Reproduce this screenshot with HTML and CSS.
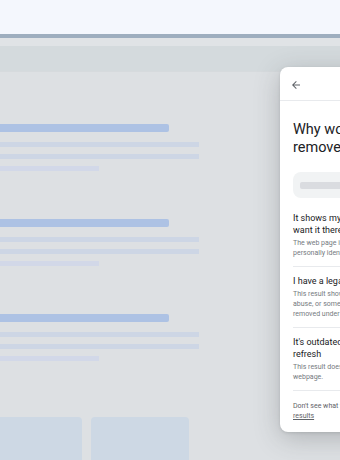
FILE: index.html
```html
<!DOCTYPE html>
<html lang="en">
<head>
  <meta charset="UTF-8">
  <title>Remove result</title>
  <link rel="stylesheet" href="styles.css">
</head>
<body>

<div class="hero"></div>

<div class="window">
  <div class="chrome">
    <div class="tabs"></div>
    <div class="toolbar"></div>
  </div>

  <div class="page">
    <div class="result">
      <div class="bar"></div>
      <div class="line"></div>
      <div class="line"></div>
      <div class="line short"></div>
    </div>
    <div class="result">
      <div class="bar"></div>
      <div class="line"></div>
      <div class="line"></div>
      <div class="line short"></div>
    </div>
    <div class="result">
      <div class="bar"></div>
      <div class="line"></div>
      <div class="line"></div>
      <div class="line short"></div>
    </div>
    <div class="tiles">
      <div class="tile"></div>
      <div class="tile"></div>
    </div>
  </div>

  <aside class="panel">
    <div class="panel-head">
      <svg class="back" viewBox="0 0 24 24" width="12" height="12">
        <path d="M20 11H7.83l5.59-5.59L12 4l-8 8 8 8 1.41-1.41L7.83 13H20v-2z" fill="#5f6368"/>
      </svg>
    </div>
    <div class="panel-body">
      <h1>Why would you like this result<br>removed?</h1>
      <div class="result-preview"><span></span></div>

      <div class="options">
        <div class="option">
          <h2>It shows my personal contact info and I don't<br>want it there</h2>
          <p>The web page includes my contact info or other<br>personally identifiable info</p>
        </div>
        <div class="option">
          <h2>I have a legal removal request</h2>
          <p>This result shows content related to harassment,<br>abuse, or something else that should be<br>removed under the law</p>
        </div>
        <div class="option">
          <h2>It's outdated and I want to request a<br>refresh</h2>
          <p>This result doesn't match the current<br>webpage.</p>
        </div>
      </div>
      <p class="footer">Don't see what you're looking for? <a href="#">Learn about removing<br>results</a></p>
    </div>
  </aside>
</div>

</body>
</html>
```

FILE: styles.css
```css
body {
  margin: 0;
  width: 340px;
  height: 460px;
  overflow: hidden;
  background-color: #f4f7fd;
  font-family: Roboto, "Liberation Sans", sans-serif;
}
.hero {
  height: 34px;
  background-color: #f4f7fd;
}
.window {
  position: relative;
  border-top: 4px solid #9eaebf;
  background-color: #dde0e3;
  height: 422px;
}
.tabs {
  height: 8px;
  background-color: #e0e3e6;
}
.toolbar {
  height: 25px;
  background-color: #d4dadd;
  border-bottom: 1px solid #d6dadd;
}
.page {
  padding-top: 52px;
}
.result {
  margin-bottom: 48px;
}
.bar {
  width: 169px;
  height: 8px;
  background-color: #adc2e4;
  border-radius: 0 2px 2px 0;
  margin-bottom: 10px;
}
.line {
  width: 199px;
  height: 5px;
  background-color: #cdd6e5;
  margin-bottom: 7px;
}
.line.short {
  width: 99px;
  margin-bottom: 0;
  background-color: #d2d8e8;
}
.tiles {
  display: flex;
  gap: 9px;
  margin-top: 56px;
}
.tile {
  width: 98px;
  height: 60px;
  background-color: #cdd8e4;
  border-radius: 4px;
}
.tiles .tile:first-child {
  width: 82px;
  border-radius: 0 4px 4px 0;
}

/* side panel over the page */
.panel {
  position: absolute;
  top: 29px;
  left: 280px;
  width: 260px;
  height: 365px;
  background-color: #fff;
  border-radius: 8px;
  box-shadow: 0 6px 26px rgba(60, 64, 67, 0.28), 0 1px 3px rgba(60, 64, 67, 0.15);
}
.panel-head {
  height: 34px;
  border-bottom: 1px solid #e8eaed;
  display: flex;
  align-items: center;
  padding: 2px 0 0 10px;
  box-sizing: border-box;
}
.back {
  display: block;
}
.panel-body {
  padding: 0 13px 11px;
}
.panel h1 {
  margin: 20px 0 0;
  font-size: 14.5px;
  line-height: 18px;
  font-weight: 400;
  color: #202124;
}
.result-preview {
  margin-top: 15px;
  height: 26px;
  background-color: #f1f3f4;
  border-radius: 8px;
  display: flex;
  align-items: center;
  padding-left: 7px;
}
.result-preview span {
  width: 170px;
  height: 7px;
  background-color: #dadce0;
  border-radius: 2px;
}
.options {
  margin-top: 6px;
}
.option {
  padding: 8px 0;
  border-bottom: 1px solid #e8eaed;
}
.option h2 {
  margin: 0;
  font-size: 9px;
  line-height: 12px;
  font-weight: 400;
  color: #202124;
}
.option p {
  margin: 2px 0 0;
  font-size: 7px;
  line-height: 10px;
  color: #757a80;
}
.footer {
  margin: 10px 0 0;
  font-size: 7px;
  line-height: 10px;
  color: #5f6368;
}
.footer a {
  color: #5f6368;
}
```
